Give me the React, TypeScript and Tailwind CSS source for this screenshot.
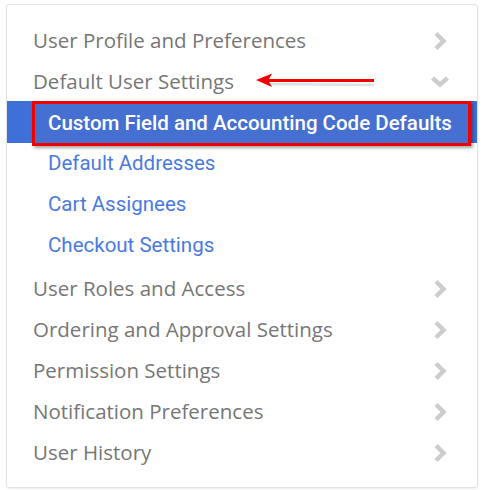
const topItems = ["User Profile and Preferences"];
const subItems = ["Default Addresses", "Cart Assignees", "Checkout Settings"];
const bottomItems = [
  "User Roles and Access",
  "Ordering and Approval Settings",
  "Permission Settings",
  "Notification Preferences",
  "User History",
];

function Chevron({ open = false }: { open?: boolean }) {
  return (
    <svg width="22" height="22" viewBox="0 0 22 22" className="text-[#cdcdcd]">
      {open ? (
        <path d="M3.5 7 L11 13.5 L18.5 7" fill="none" stroke="currentColor" strokeWidth="4.5" />
      ) : (
        <path d="M7 3.5 L14.5 11 L7 18.5" fill="none" stroke="currentColor" strokeWidth="4.5" />
      )}
    </svg>
  );
}

function Row({ label, open = false }: { label: string; open?: boolean }) {
  return (
    <div className="flex h-[41px] items-center justify-between pl-[26px] pr-[26px]">
      <span className="text-[20.5px] text-[#767676] [font-family:'Open_Sans',sans-serif]">{label}</span>
      <Chevron open={open} />
    </div>
  );
}

export default function App() {
  return (
    <div className="h-[490px] w-[485px] bg-white pl-[6px] pt-[4px]">
      <div className="w-[472px] rounded-[3px] border border-[#e2e2e2] pt-[15px] pb-[14px] shadow-[0_1px_2px_rgba(0,0,0,0.08)]">
        {topItems.map((t) => (
          <Row key={t} label={t} />
        ))}
        <div className="relative">
          <Row label="Default User Settings" open />
          {/* red callout arrow */}
          <svg
            className="absolute left-[247px] top-[11px]"
            width="124"
            height="18"
            viewBox="0 0 124 18"
          >
            <path d="M13 12 L120 13" stroke="rgba(0,0,0,0.12)" strokeWidth="2.5" />
            <path d="M2 8 L18 1.5 L15 7 L120 7 L120 10 L15 10 L18 15 Z" fill="#f40000" />
          </svg>
        </div>
        <div className="mt-[-1px] flex h-[42px] items-center bg-[#3f6fd8] pl-[25px] pr-[6px]">
          <div className="flex h-[45px] w-[439px] translate-y-[1px] items-center border-[3px] border-[#f00000] bg-[#456fd0] pl-[13px] shadow-[2px_2px_3px_rgba(0,0,0,0.35)]">
            <span className="text-[20.5px] font-medium text-white [font-family:Roboto,sans-serif]">
              Custom Field and Accounting Code Defaults
            </span>
          </div>
        </div>
        {subItems.map((s) => (
          <div key={s} className="flex h-[41px] items-center pl-[41px]">
            <span className="text-[20.5px] text-[#4a7ae0] [font-family:Roboto,sans-serif]">{s}</span>
          </div>
        ))}
        <div className="h-[2px]" />
        {bottomItems.map((t) => (
          <Row key={t} label={t} />
        ))}
      </div>
    </div>
  );
}
